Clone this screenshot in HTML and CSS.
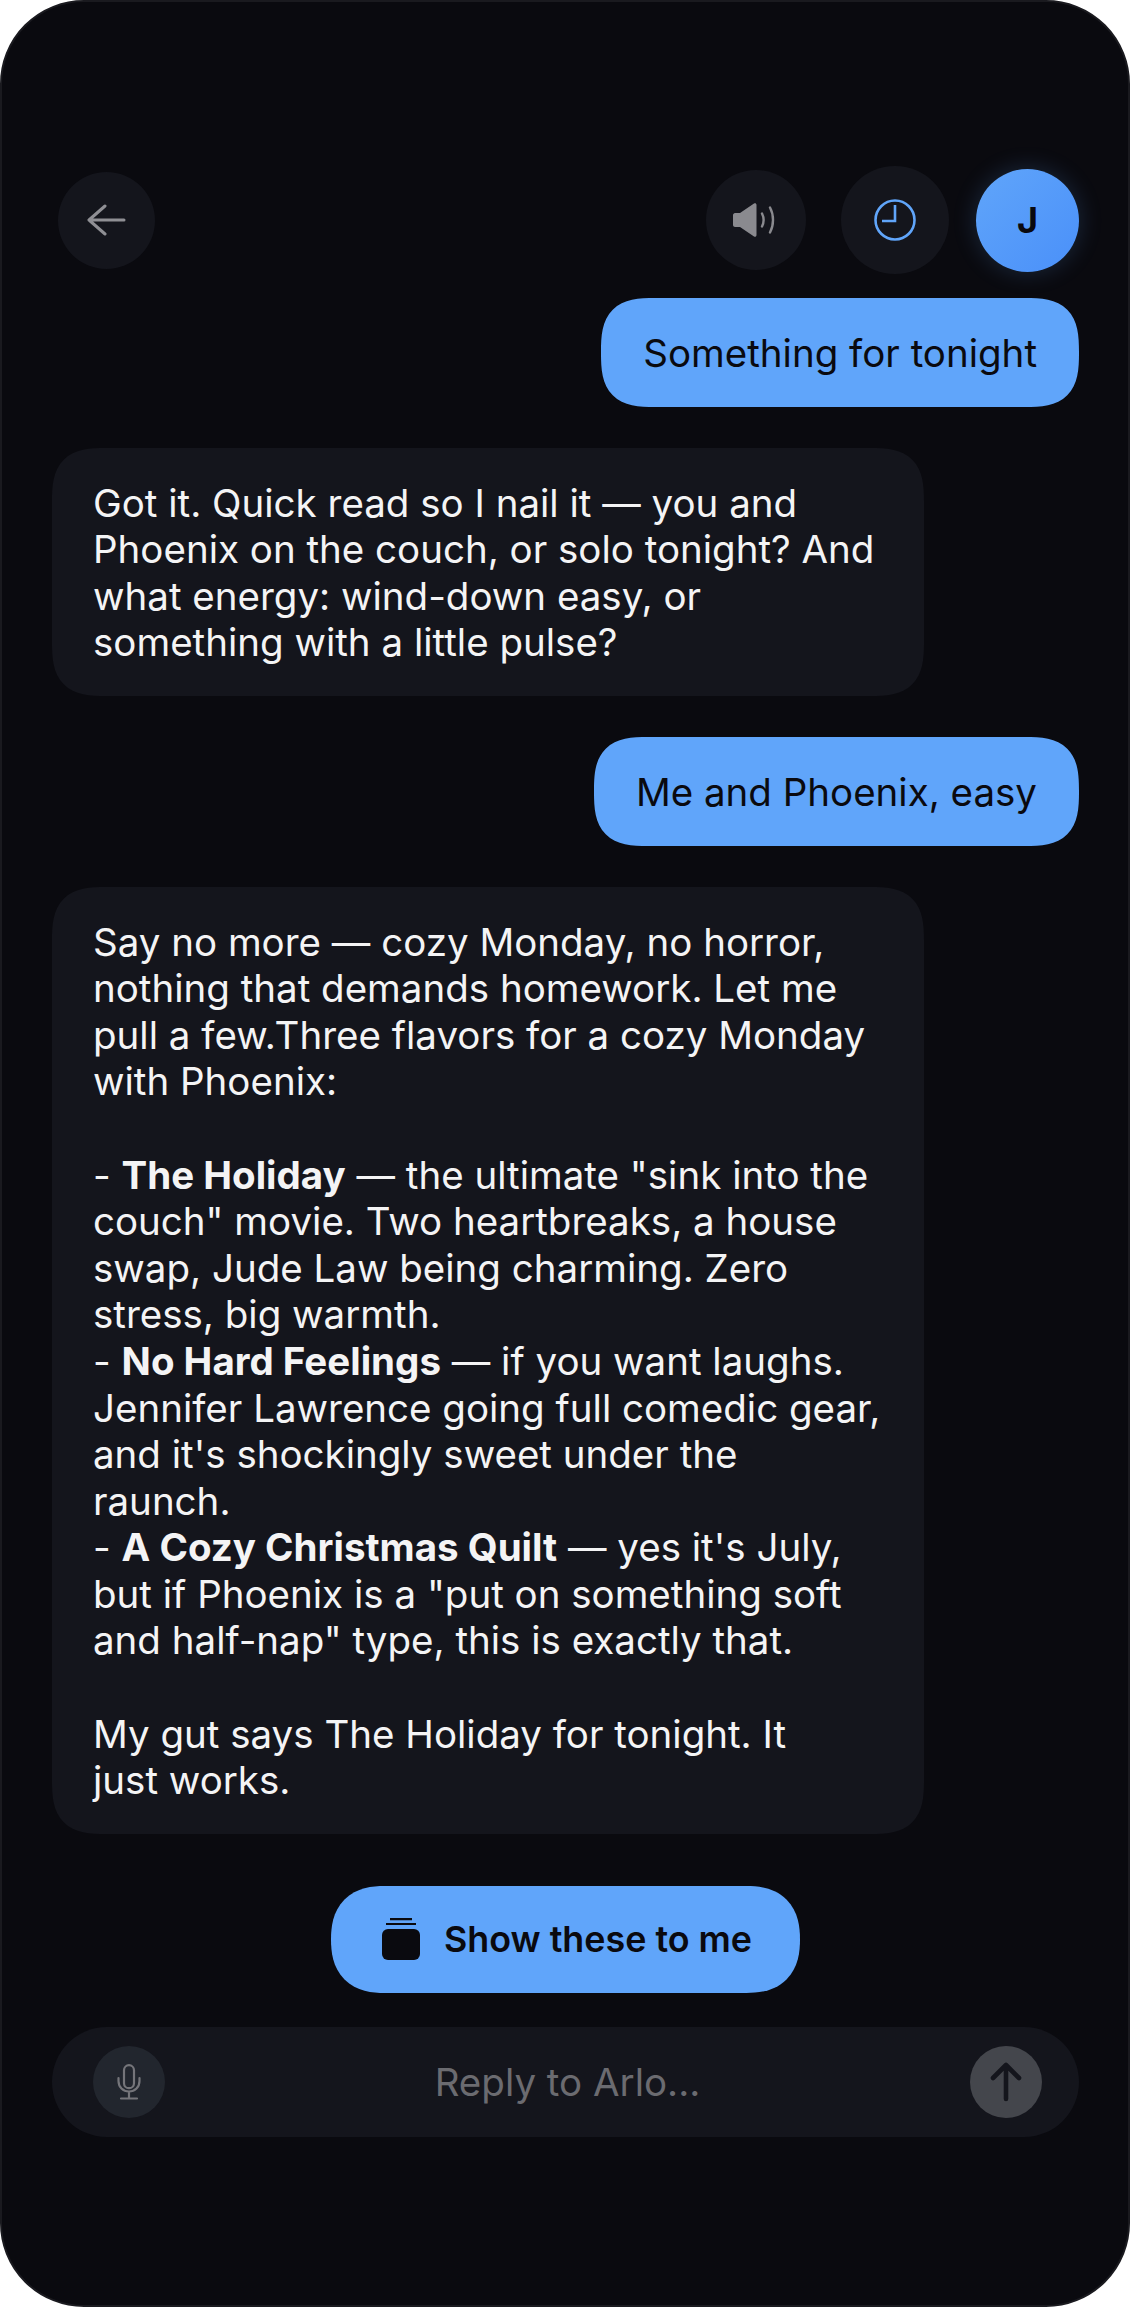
FILE: index.html
```html
<!DOCTYPE html>
<html lang="en">
<head>
    <meta charset="UTF-8">
    <title>Arlo</title>
    <link rel="stylesheet" href="styles.css">
</head>
<body>
    <div class="phone">
        <div class="top">
            <a class="round back">
                <svg width="40" height="32" viewBox="0 0 40 32" fill="none" stroke="#8f8f94" stroke-width="3" stroke-linecap="round" stroke-linejoin="round"><path d="M2 16H37M18 2L2 16L18 30"/></svg>
            </a>
            <a class="round sound">
                <svg width="46" height="36" viewBox="0 0 46 36"><path fill="#8a8a8f" d="M2 11H7L21 1.5C22.2 .8 23.5 1.400 23.500 3V33C23.500 34.600 22.200 35.200 21 34.500L7 25H2C1 25 0 24 0 23V13C0 12 1 11 2 11Z"/><path fill="none" stroke="#8a8a8f" stroke-width="2.400" stroke-linecap="round" d="M29 11.500C31 15.500 31 20.500 29 24.500M37 5.500C41 13 41 23 37 30.500"/></svg>
            </a>
            <a class="round clock">
                <svg width="44" height="44" viewBox="0 0 44 44" fill="none" stroke="#60a5fa" stroke-width="2.600"><circle cx="22" cy="22" r="19.500"/><path d="M22 7V23H9"/></svg>
            </a>
            <a class="avatar">J</a>
        </div>

        <div class="msg me">Something for tonight</div>
        <div class="msg arlo">Got it. Quick read so I nail it — you and<br>Phoenix on the couch, or solo tonight? And<br>what energy: wind-down easy, or<br>something with a little pulse?</div>
        <div class="msg me">Me and Phoenix, easy</div>
        <div class="msg arlo">Say no more — cozy Monday, no horror,<br>nothing that demands homework. Let me<br>pull a few.Three flavors for a cozy Monday<br>with Phoenix:<br><br>- <b>The Holiday</b> — the ultimate "sink into the<br>couch" movie. Two heartbreaks, a house<br>swap, Jude Law being charming. Zero<br>stress, big warmth.<br>- <b>No Hard Feelings</b> — if you want laughs.<br>Jennifer Lawrence going full comedic gear,<br>and it's shockingly sweet under the<br>raunch.<br>- <b>A Cozy Christmas Quilt</b> — yes it's July,<br>but if Phoenix is a "put on something soft<br>and half-nap" type, this is exactly that.<br><br>My gut says The Holiday for tonight. It<br>just works.</div>

        <a class="show">
            <svg width="38" height="42" viewBox="0 0 38 42"><rect x="0" y="11" width="38" height="31" rx="6" fill="#0a0a0f"/><path d="M4 6H34M8 1.200H30" stroke="#0a0a0f" stroke-width="2.200" fill="none"/></svg>
            Show these to me
        </a>

        <div class="reply">
            <a class="mic">
                <svg width="24" height="36" viewBox="0 0 24 36" fill="none" stroke="#75757a" stroke-width="2.200" stroke-linecap="round"><rect x="7" y="1.200" width="10" height="23" rx="5"/><path d="M1.500 14V17C1.500 23 6 27.500 12 27.500S22.500 23 22.500 17V14M12 27.500V34M4 34.500H20"/></svg>
            </a>
            <span class="hint">Reply to Arlo...</span>
            <a class="send">
                <svg width="32" height="40" viewBox="0 0 32 40" fill="none" stroke="#14151c" stroke-width="4.600" stroke-linecap="round" stroke-linejoin="round"><path d="M16 37V3M3 16L16 3L29 16"/></svg>
            </a>
        </div>
    </div>
</body>
</html>
```

FILE: styles.css
```css
*{
    margin: 0px;
    padding: 0px;
    box-sizing: border-box;
}
html,body{
    background-color: #fff;
}
.phone{
    width: 1130px;
    height: 2307px;
    padding: 164px 49px 0px 50px;
    background-color: #0a0a0f;
    border: 2px solid #1a1a1f;
    border-radius: 84px;
    display: flex;
    flex-direction: column;
    font-family: Inter, "Liberation Sans", sans-serif;
    font-size: 38.5px;
    line-height: 46.6px;
    color: #f4f4f5;
    overflow: hidden;
}
.top{
    display: flex;
    align-items: center;
    height: 108px;
    margin-bottom: 24px;
}
.round{
    display: flex;
    align-items: center;
    justify-content: center;
    border-radius: 50%;
    background-color: #14151c;
}
.back{
    width: 97px;
    height: 97px;
    margin-left: 6px;
    margin-right: auto;
}
.sound{
    width: 100px;
    height: 100px;
    margin-right: 35px;
}
.clock{
    width: 108px;
    height: 108px;
    margin-right: 27px;
}
.avatar{
    width: 103px;
    height: 103px;
    border-radius: 50%;
    display: flex;
    align-items: center;
    justify-content: center;
    font-size: 36px;
    font-weight: 700;
    color: #0a0a0f;
    background: linear-gradient(135deg, #60a5fa, #4a90f9);
    box-shadow: 0 0 24px rgba(96,165,250,0.2);
}
.msg{
    border-radius: 54px;
    corner-shape: superellipse(1.5);
    padding: 32px 41px 30px;
    margin-bottom: 41px;
}
.me{
    align-self: flex-end;
    padding-left: 42px;
    padding-right: 42px;
    color: #0a0a0f;
    background-color: #60a5fa;
}
.arlo{
    width: 872px;
    background-color: #14151c;
}
.arlo b{
    font-weight: 700;
}
.show{
    align-self: center;
    height: 107px;
    display: flex;
    align-items: center;
    gap: 24px;
    padding: 0px 48px 0px 51px;
    margin-top: 11px;
    border-radius: 54px;
    corner-shape: superellipse(1.25);
    font-size: 35.85px;
    font-weight: 600;
    color: #0a0a0f;
    background-color: #60a5fa;
}
.reply{
    height: 110px;
    margin-top: 34px;
    padding: 0px 37px 0px 41px;
    display: flex;
    align-items: center;
    justify-content: space-between;
    border-radius: 55px;
    background-color: #14151c;
}
.mic,.send{
    width: 72px;
    height: 72px;
    border-radius: 50%;
    display: flex;
    align-items: center;
    justify-content: center;
}
.mic{
    background-color: #22262e;
}
.send{
    background-color: #44464c;
}
.hint{
    color: #6b6b70;
}
```
